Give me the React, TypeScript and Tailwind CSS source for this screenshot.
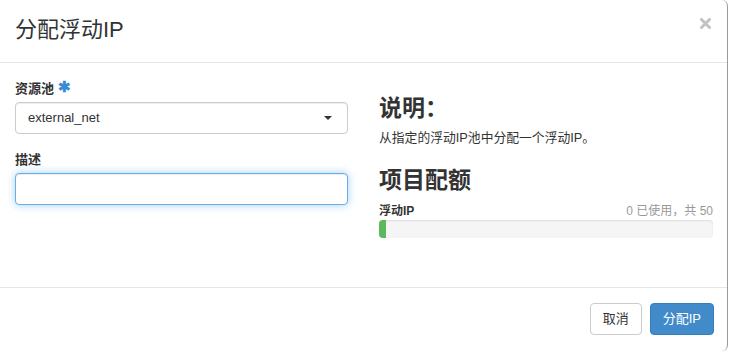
const font = { fontFamily: '"Liberation Sans", "Noto Sans CJK SC", sans-serif' };

function CloseIcon() {
  return (
    <svg width="11" height="11" viewBox="0 0 11 11" className="text-[#c2c2c2]">
      <path d="M1.5 1.5 L9.5 9.5 M9.5 1.5 L1.5 9.5" stroke="currentColor" strokeWidth="3" strokeLinecap="round" />
    </svg>
  );
}

export default function App() {
  return (
    <div className="w-[730px] h-[351px] bg-white text-[#333]" style={font}>
      <div className="w-[728px] h-[351px] bg-white border-r border-[#9a9a9a] rounded-r-[6px] flex flex-col">
        {/* header */}
        <div className="h-[63px] border-b border-[#e5e5e5] px-[15px] flex items-start justify-between">
          <h4 className="pt-[15px] text-[22px] leading-[30px] font-normal">分配浮动IP</h4>
          <button className="mt-[18px] mr-[1px]">
            <CloseIcon />
          </button>
        </div>

        {/* body */}
        <div className="h-[224px] px-[15px] pt-[17px] grid grid-cols-[333px_334px] gap-x-[31px]">
          <div>
            <label className="flex items-center gap-[4px] text-[13px] leading-[18px] font-bold">
              资源池
              <span className="text-[#3b8bd3] text-[15px] leading-[18px] -mt-[4px]">✱</span>
            </label>
            <div className="mt-[4px] h-[32px] border border-[#cccccc] rounded-[4px] flex items-center justify-between pl-[12px] pr-[15px] shadow-[inset_0_1px_1px_rgba(0,0,0,0.075)]">
              <span className="text-[13px]">external_net</span>
              <span className="w-0 h-0 border-l-[4px] border-r-[4px] border-t-[4px] border-l-transparent border-r-transparent border-t-[#333]" />
            </div>
            <label className="block mt-[17px] text-[13px] leading-[18px] font-bold">描述</label>
            <div className="mt-[4px] h-[32px] border border-[#66afe9] rounded-[4px] bg-white shadow-[inset_0_1px_1px_rgba(0,0,0,0.075),0_0_8px_rgba(102,175,233,0.6)]" />
          </div>

          <div>
            <h3 className="mt-[16px] text-[23px] leading-[25px] font-bold">说明：</h3>
            <p className="mt-[8px] text-[12.8px] leading-[18px]">从指定的浮动IP池中分配一个浮动IP。</p>
            <h3 className="mt-[21px] text-[23px] leading-[25px] font-bold">项目配额</h3>
            <div className="mt-[10px] flex justify-between text-[12px] leading-[16px]">
              <span className="font-bold">浮动IP</span>
              <span className="text-[#999]">0 已使用，共 50</span>
            </div>
            <div className="mt-[1px] h-[18px] rounded-[4px] bg-[#f5f5f5] shadow-[inset_0_1px_2px_rgba(0,0,0,0.1)] overflow-hidden">
              <div className="h-full w-[7px] bg-[#5cb85c]" />
            </div>
          </div>
        </div>

        {/* footer */}
        <div className="border-t border-[#e5e5e5] pt-[15px] pr-[13px] flex justify-end gap-[8px]">
          <button className="h-[32px] px-[12px] border border-[#cccccc] rounded-[4px] bg-white text-[13px] text-[#333]">
            取消
          </button>
          <button className="h-[32px] px-[12px] border border-[#357ebd] rounded-[4px] bg-[#428bca] text-[13px] text-white">
            分配IP
          </button>
        </div>
      </div>
    </div>
  );
}
